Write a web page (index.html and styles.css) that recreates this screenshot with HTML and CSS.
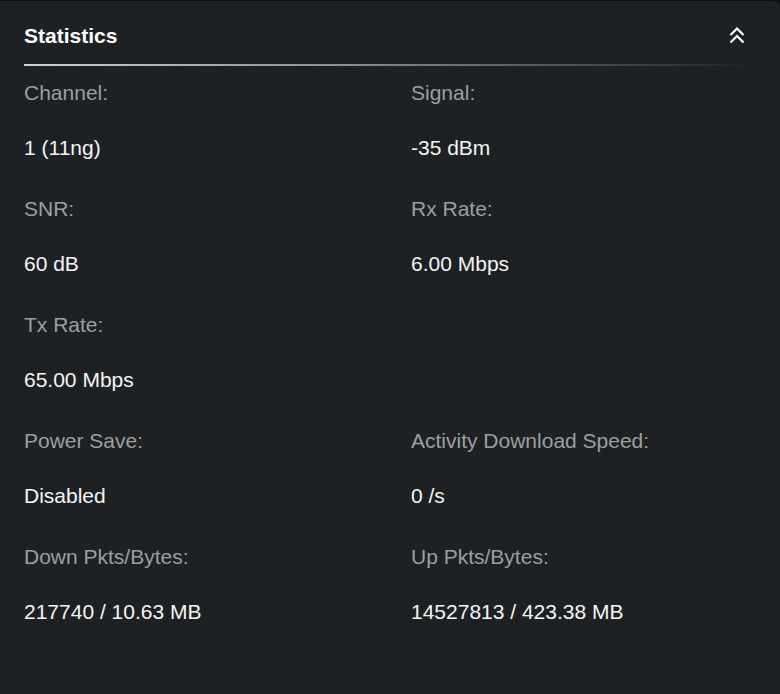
FILE: index.html
```html
<!DOCTYPE html>
<html lang="en">
<head>
  <meta charset="UTF-8" />
  <meta name="viewport" content="width=device-width, initial-scale=1.0" />
  <title>Statistics</title>
  <link rel="stylesheet" href="styles.css">
</head>

<body>
  <div class="card">
    <div class="card-header">
      <h2>Statistics</h2>
      <button class="collapse-btn" aria-label="Collapse">
        <svg width="16" height="20" viewBox="0 0 16 20">
          <path d="M1.5 9 L8 2.5 L14.5 9" fill="none" stroke="#fff" stroke-width="2.2"/>
          <path d="M1.5 16.5 L8 10 L14.5 16.5" fill="none" stroke="#fff" stroke-width="2.2"/>
        </svg>
      </button>
    </div>

    <div class="stats">
      <div class="stat">
        <div class="label">Channel:</div>
        <div class="value">1 (11ng)</div>
      </div>
      <div class="stat">
        <div class="label">Signal:</div>
        <div class="value">-35 dBm</div>
      </div>
      <div class="stat">
        <div class="label">SNR:</div>
        <div class="value">60 dB</div>
      </div>
      <div class="stat">
        <div class="label">Rx Rate:</div>
        <div class="value">6.00 Mbps</div>
      </div>
      <div class="stat">
        <div class="label">Tx Rate:</div>
        <div class="value">65.00 Mbps</div>
      </div>
      <div class="stat"></div>
      <div class="stat">
        <div class="label">Power Save:</div>
        <div class="value">Disabled</div>
      </div>
      <div class="stat">
        <div class="label">Activity Download Speed:</div>
        <div class="value">0 /s</div>
      </div>
      <div class="stat">
        <div class="label">Down Pkts/Bytes:</div>
        <div class="value">217740 / 10.63 MB</div>
      </div>
      <div class="stat">
        <div class="label">Up Pkts/Bytes:</div>
        <div class="value">14527813 / 423.38 MB</div>
      </div>
    </div>
  </div>
</body>
</html>
```

FILE: styles.css
```css
body {
  margin: 0;
  background: #0c0d0e;
  font-family: "Liberation Sans", Arial, sans-serif;
}
.card {
  margin-top: 1px;
  min-height: 693px;
  box-sizing: border-box;
  background: #1e2124;
  border-top-right-radius: 6px;
  padding: 0 24px;
  color: #f2f2f2;
}
.card-header {
  position: relative;
  display: flex;
  align-items: center;
  justify-content: space-between;
  padding: 23px 0 16px;
}
.card-header::after {
  content: "";
  position: absolute;
  left: 0;
  right: 0;
  bottom: -2px;
  height: 2px;
  background: linear-gradient(to right, #cfd0d1 0%, #8a8c8e 45%, #45484b 80%, rgba(30, 33, 36, 0) 100%);
}
.card-header h2 {
  margin: 0;
  font-size: 21px;
  line-height: 24px;
  font-weight: bold;
  color: #fff;
}
.collapse-btn {
  background: none;
  border: none;
  padding: 0;
  margin-right: 11px;
  cursor: pointer;
  display: flex;
}
.stats {
  display: grid;
  grid-template-columns: 387px 1fr;
  padding-top: 17px;
}
.stat {
  padding-bottom: 37px;
}
.label {
  font-size: 21px;
  line-height: 24px;
  color: #9c9fa2;
  margin-bottom: 31px;
}
.value {
  font-size: 21px;
  line-height: 24px;
  color: #f4f4f4;
}
```
